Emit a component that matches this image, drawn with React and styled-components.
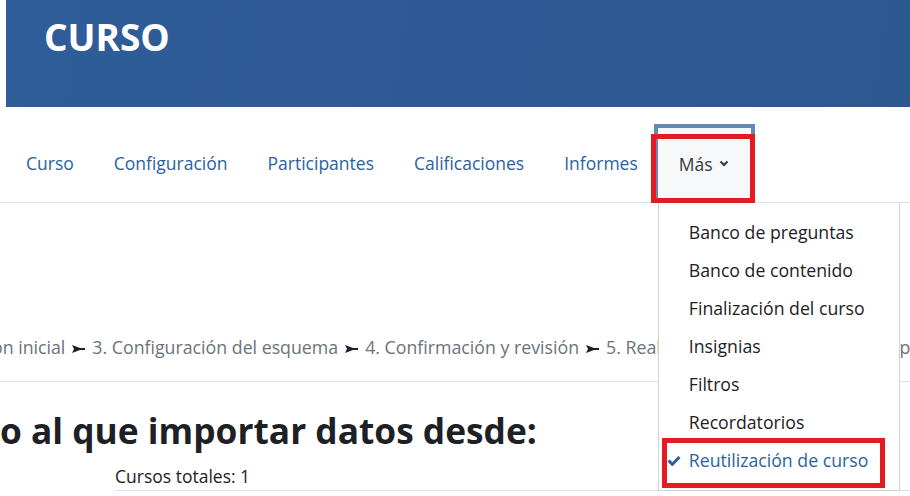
import React from 'react';
import styled, { createGlobalStyle } from 'styled-components';

const Global = createGlobalStyle`
	html, body {
		margin: 0;
		padding: 0;
		background: #fff;
		overflow: hidden;
	}
	body {
		font-family: 'Open Sans', 'Noto Sans', sans-serif;
		color: #1d2125;
	}
`;

const Page = styled.div`
	width: 910px;
	height: 496px;
	overflow: hidden;
	position: relative;
`;

const Header = styled.header`
	margin-left: 6px;
	height: 107px;
	background: linear-gradient(100deg, #2f5d99 0%, #2c5890 100%);
	padding-left: 38px;
	box-sizing: border-box;
	display: flex;
	align-items: flex-start;
`;

const Title = styled.h1`
	margin: 11px 0 0;
	font-size: 37px;
	font-weight: 700;
	color: #fff;
`;

const Nav = styled.nav`
	height: 95px;
	padding-left: 6px;
	border-bottom: 1px solid #dee2e6;
	display: flex;
	align-items: flex-end;
	position: relative;
	z-index: 2;
`;

const NavLink = styled.a`
	height: 78px;
	padding: 0 20px;
	display: flex;
	align-items: center;
	font-size: 17.5px;
	color: #2b5fa2;
	text-decoration: none;
`;

const MoreItem = styled.div`
	position: relative;
	height: 79px;
	margin-bottom: -1px;
	margin-left: -4px;
	width: 101px;
	box-sizing: border-box;
	border: 4px solid #6688b4;
	border-bottom: none;
	background: #f7f8fa;
	display: flex;
	align-items: center;
	padding: 0 0 4px 21px;
	font-size: 17.5px;
	color: #343a40;
	gap: 6px;
`;

const Mark = styled.div`
	position: absolute;
	border: 5px solid #e41c22;
	box-sizing: border-box;
	pointer-events: none;
	left: ${(p) => p.$l}px;
	top: ${(p) => p.$t}px;
	width: ${(p) => p.$w}px;
	height: ${(p) => p.$h}px;
`;

const Menu = styled.ul`
	position: absolute;
	top: 100%;
	left: 0;
	margin: 0;
	width: 242px;
	box-sizing: border-box;
	padding: 10px 0 11px;
	list-style: none;
	background: #fff;
	border: 1px solid #cfd2d6;
	border-top: none;
	z-index: 3;
`;

const MenuItem = styled.li`
	position: relative;
	height: 38px;
	display: flex;
	align-items: center;
	padding-left: 30px;
	font-size: 17.7px;
	white-space: nowrap;
	color: ${(p) => (p.$active ? '#2b5fa2' : '#1d2125')};
`;

const Check = styled.svg`
	position: absolute;
	left: 8px;
	top: 14px;
`;

const Content = styled.main`
	position: relative;
`;

const Crumbs = styled.div`
	margin-top: 132px;
	height: 46px;
	border-bottom: 1px solid #dee2e6;
	white-space: nowrap;
	font-size: 17.75px;
	color: #6a737b;
	position: relative;
`;

const Line = styled.span`
	position: relative;
	display: inline-block;
	margin-left: ${(p) => p.$shift || 0}px;
`;

const Hidden = styled.span`
	position: absolute;
	right: 100%;
	top: 0;
	white-space: nowrap;
`;

const SepIcon = styled.svg`
	margin: 0 7px;
	vertical-align: 1px;
`;

const Heading = styled.h2`
	margin: 24px 0 0;
	font-size: 35.3px;
	line-height: 1.362;
	font-weight: 700;
	white-space: nowrap;
	color: #1d2125;
`;

const Total = styled.div`
	margin: 10px 0 0 115px;
	padding-bottom: 2px;
	border-bottom: 1px solid #dee2e6;
	font-size: 17.5px;
	color: #1d2125;
`;

const Chevron = () => (
	<svg width="10" height="7" viewBox="0 0 10 7">
		<path d="M1.5 1.5l3.5 3.5l3.5-3.5" fill="none" stroke="#343a40" strokeWidth="2.2" />
	</svg>
);

const Sep = () => (
	<SepIcon width="13" height="8" viewBox="0 0 13 8">
		<path d="M0 0L8 3H13V5H8L0 8L2 4Z" fill="#1d2125" />
	</SepIcon>
);

const links = ['Curso', 'Configuración', 'Participantes', 'Calificaciones', 'Informes'];

const items = [
	'Banco de preguntas',
	'Banco de contenido',
	'Finalización del curso',
	'Insignias',
	'Filtros',
	'Recordatorios'
];

function App() {
	return (
		<Page>
			<Global />
			<Header>
				<Title>CURSO</Title>
			</Header>
			<Nav>
				{links.map((l) => (
					<NavLink key={l} href="#">
						{l}
					</NavLink>
				))}
				<MoreItem>
					Más <Chevron />
					<Mark $l={-7} $t={6} $w={104} $h={69} />
					<Menu>
						{items.map((i) => (
							<MenuItem key={i}>{i}</MenuItem>
						))}
						<MenuItem $active>
							<Check width="14" height="11" viewBox="0 0 14 11">
								<path d="M1.5 5.5l3.8 3.8L12.5 2" fill="none" stroke="#2b5fa2" strokeWidth="3" />
							</Check>
							Reutilización de curso
						</MenuItem>
						<Mark $l={3} $t={235} $w={223} $h={50} />
					</Menu>
				</MoreItem>
			</Nav>
			<Content>
				<Crumbs>
					<Line $shift={-8}>
						<Hidden>1. Selección de curso ► 2. Configuraci</Hidden>
						on inicial<Sep />3. Configuración del esquema<Sep />4. Confirmación y revisión
						<Sep />5. Realizar la importación<Sep />6. Completo
					</Line>
				</Crumbs>
				<Heading>
					<Line>
						<Hidden>Encontrar un curs</Hidden>o al que importar datos desde:
					</Line>
				</Heading>
				<Total>Cursos totales: 1</Total>
			</Content>
		</Page>
	);
}

export default App;
